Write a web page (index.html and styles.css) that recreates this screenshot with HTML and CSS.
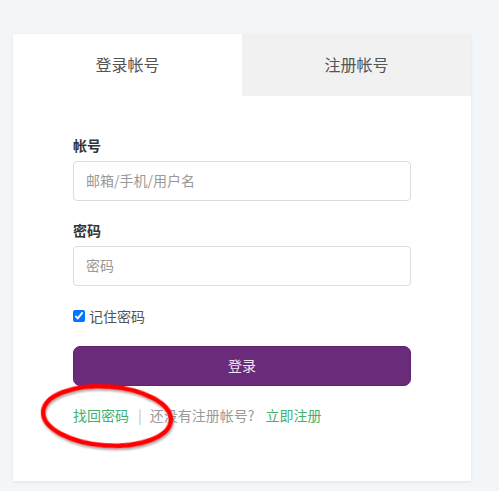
FILE: index.html
```html
<!DOCTYPE html>
<html lang="zh">
<head>
<meta charset="utf-8">
<link rel="stylesheet" href="styles.css">
</head>
<body>
<div class="card">
  <div class="tabs">
    <div class="tab active">登录帐号</div>
    <div class="tab">注册帐号</div>
  </div>
  <form class="form">
    <label class="label">帐号</label>
    <input class="input" type="text" placeholder="邮箱/手机/用户名">
    <label class="label second">密码</label>
    <input class="input" type="password" placeholder="密码">
    <div class="remember"><input type="checkbox" checked class="check"><span>记住密码</span></div>
    <button type="button" class="btn">登录</button>
    <div class="links">
      <a class="link">找回密码</a><span class="sep">|</span><span class="muted">还没有注册帐号?</span><a class="link">立即注册</a>
      <svg class="circle" width="150" height="80" viewBox="0 0 150 80">
        <defs>
          <filter id="sh" x="-10%" y="-10%" width="130%" height="140%">
            <feDropShadow dx="1" dy="2" stdDeviation="1.2" flood-color="#000" flood-opacity="0.35"/>
          </filter>
        </defs>
        <ellipse cx="72" cy="38" rx="64" ry="29.5" fill="none" stroke="#ff0000" stroke-width="4.5" transform="rotate(4 72 38)" filter="url(#sh)"/>
      </svg>
    </div>
  </form>
</div>
</body>
</html>
```

FILE: styles.css
```css
html, body {
  margin: 0;
  padding: 0;
}
body {
  background: #f2f6f9;
  font-family: "Noto Sans CJK SC", "Noto Sans", sans-serif;
  width: 499px;
  height: 491px;
  overflow: hidden;
}
.card {
  margin: 34px 0 0 13px;
  width: 458px;
  background: #fff;
  box-shadow: 0 1px 3px rgba(0, 0, 0, 0.08);
}
.tabs {
  display: flex;
  height: 62px;
}
.tab {
  flex: 1;
  display: flex;
  align-items: center;
  justify-content: center;
  padding-bottom: 2px;
  font-size: 16px;
  color: #555;
  background: #f1f1f1;
}
.tab.active {
  background: #fff;
  flex: 0 0 229px;
}
.form {
  display: flex;
  flex-direction: column;
  padding: 40px 60px 57px;
  margin: 0;
}
.label {
  font-size: 14px;
  font-weight: bold;
  color: #333;
  line-height: 18px;
  margin-bottom: 7px;
}
.label.second {
  margin-top: 20px;
}
.input {
  box-sizing: border-box;
  height: 40px;
  border: 1px solid #dcdcdc;
  border-radius: 4px;
  padding: 0 12px 2px;
  font-size: 14px;
  font-family: inherit;
  color: #333;
  outline: none;
}
.input::placeholder {
  color: #999;
}
.remember {
  margin-top: 21px;
  height: 18px;
  display: flex;
  align-items: center;
  font-size: 14px;
  color: #555;
}
.check {
  margin: 0 4px 0 0;
  width: 12px;
  height: 12px;
}
.btn {
  margin-top: 21px;
  height: 40px;
  padding: 0 0 2px;
  background: #6a2c7a;
  border: 1px solid #5e2370;
  border-radius: 7px;
  color: #f0e6f2;
  font-size: 14px;
  font-family: inherit;
}
.links {
  position: relative;
  margin-top: 20px;
  line-height: 18px;
  font-size: 14px;
  display: flex;
  align-items: center;
}
.link {
  color: #45b06e;
}
.sep {
  color: #bbb;
  margin: 0 8px 0 9px;
}
.muted {
  color: #999;
  margin-right: 11px;
}
.circle {
  position: absolute;
  left: -38px;
  top: -28px;
  pointer-events: none;
}
```
